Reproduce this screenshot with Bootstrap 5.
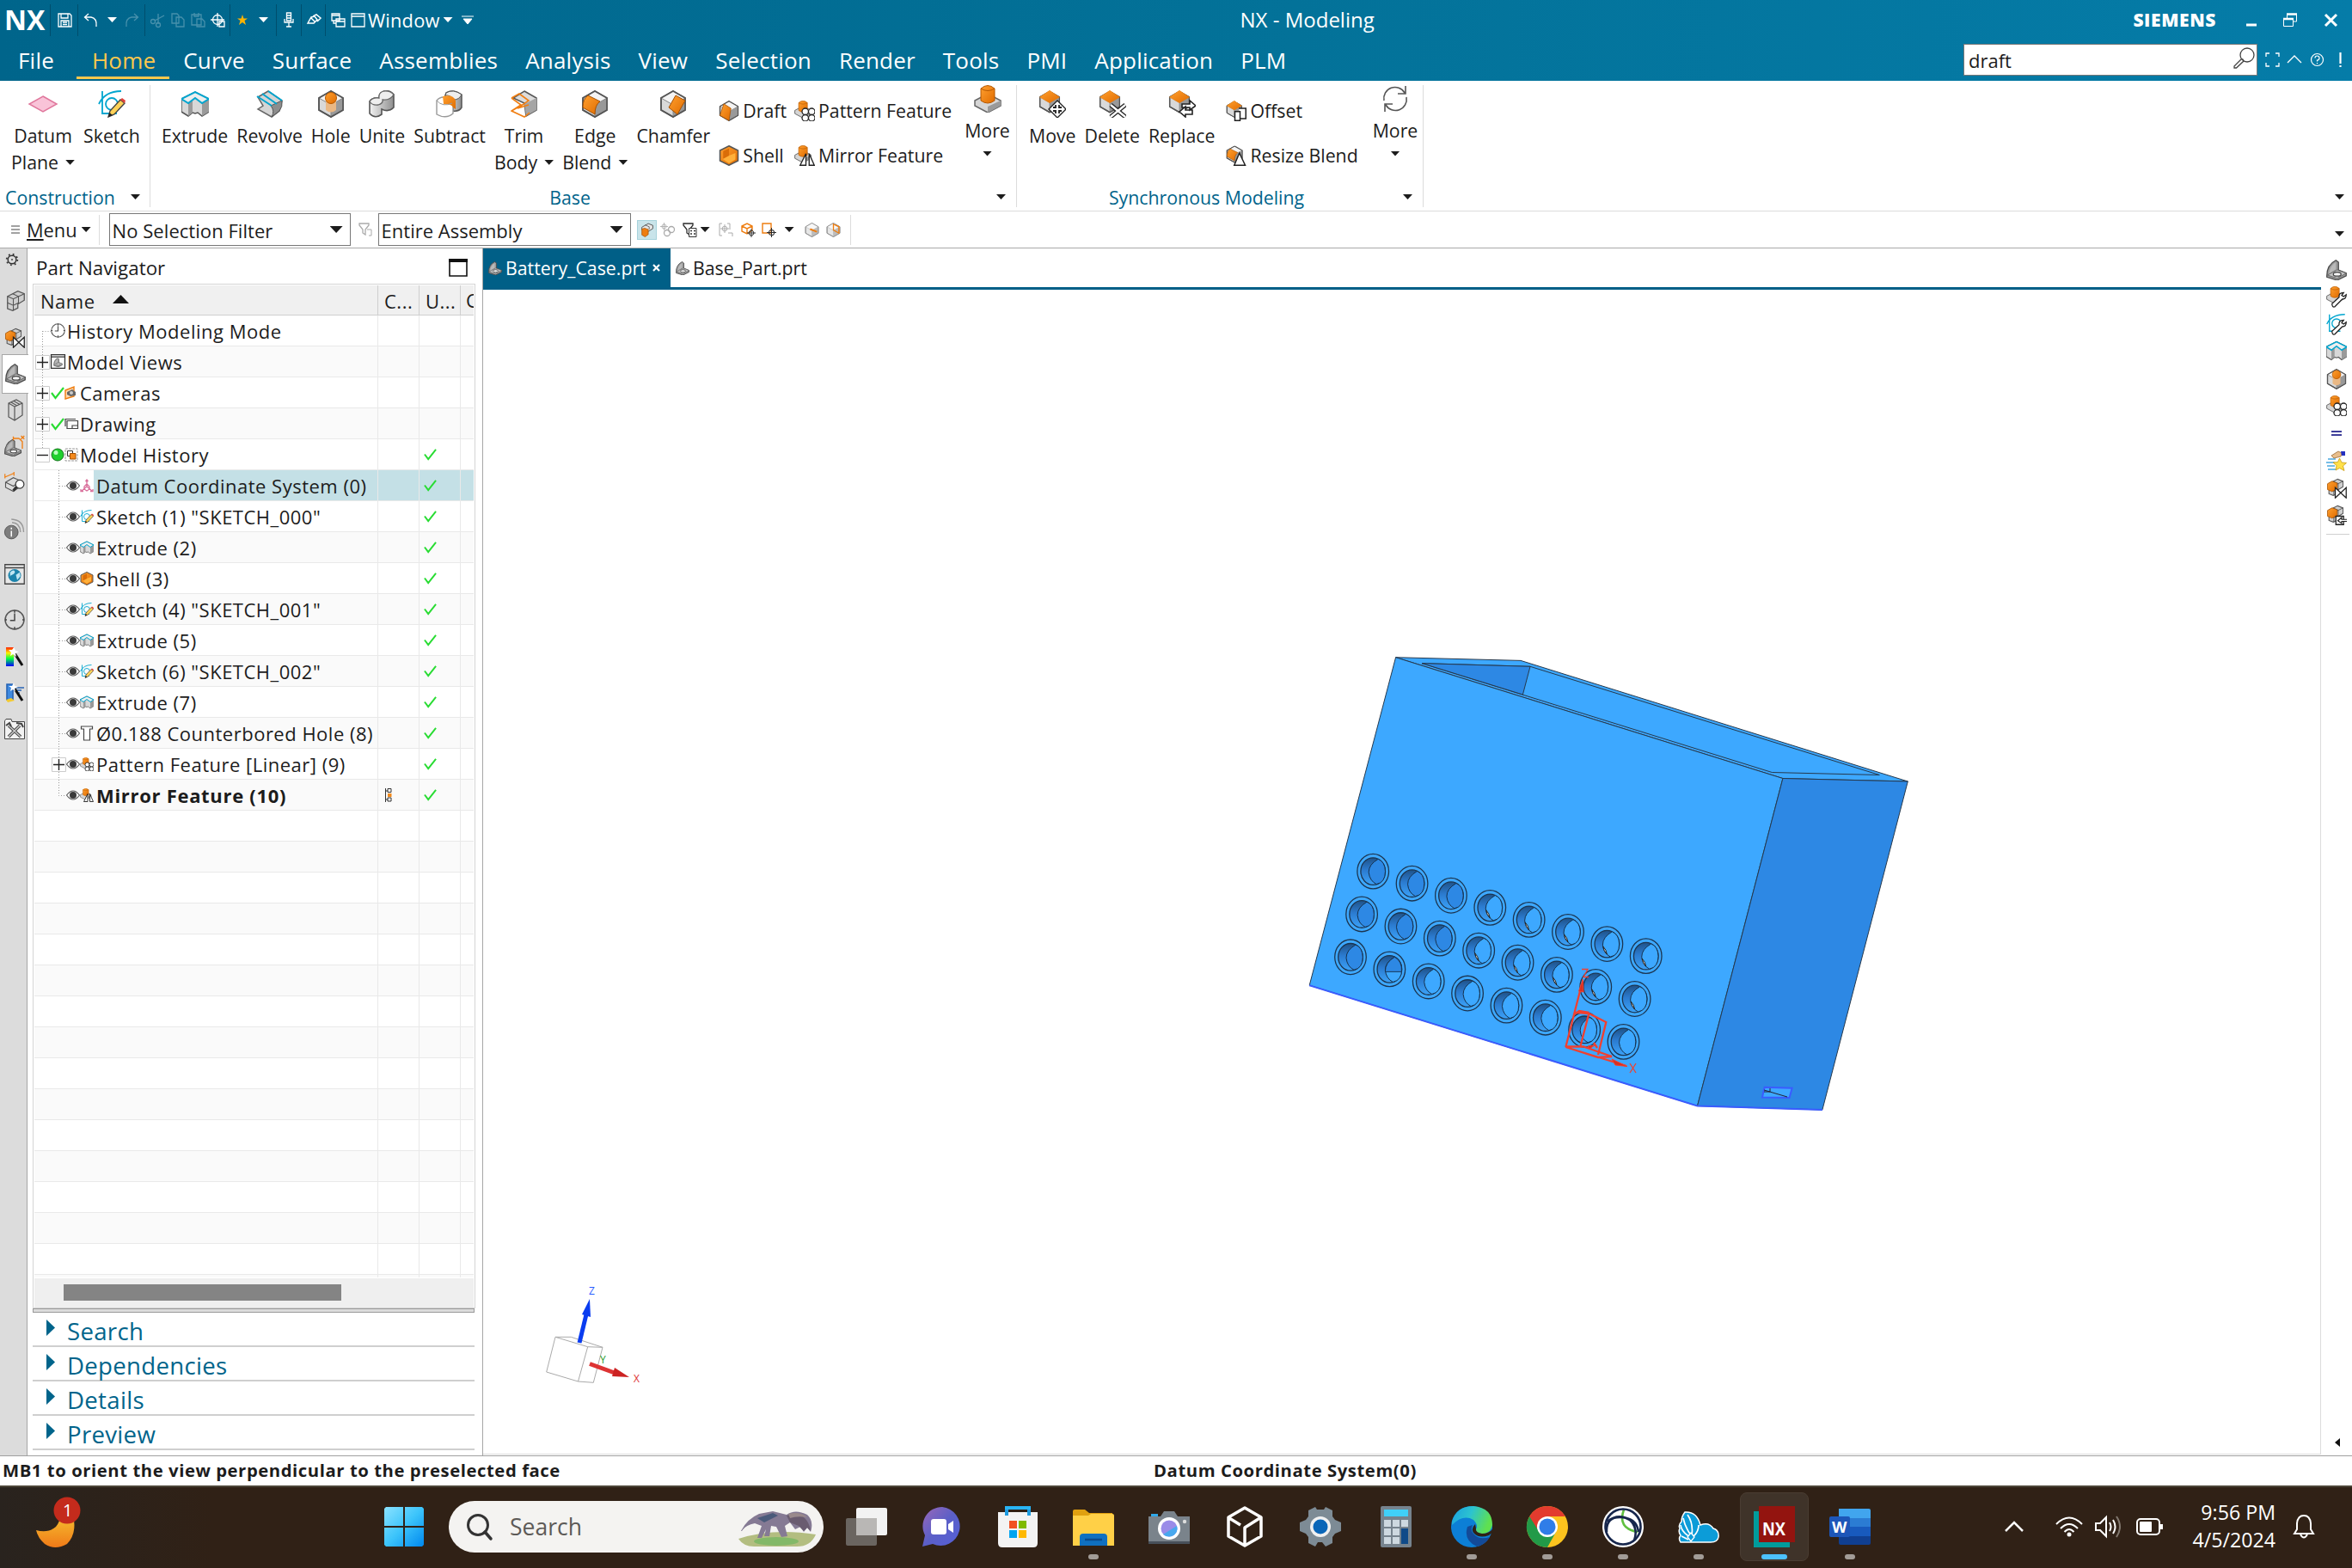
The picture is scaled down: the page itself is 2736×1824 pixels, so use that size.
<!DOCTYPE html>
<html lang="en">
<head>
<meta charset="utf-8">
<title>NX - Modeling</title>
<link href="https://cdn.jsdelivr.net/npm/bootstrap@5.3.0/dist/css/bootstrap.min.css" rel="stylesheet">
<style>
html,body{height:1824px;width:2736px;overflow:hidden}
body{font-family:"Open Sans","Noto Sans",sans-serif;font-size:21.3px;line-height:30px;color:#1c1c1c;background:#fff}
svg{display:block;flex:none;overflow:visible}
.nw{white-space:nowrap}
/* left gaps */
.g3{margin-left:3px}.g4{margin-left:4px}.g5{margin-left:5px}.g6{margin-left:6px}.g7{margin-left:7px}.g8{margin-left:8px}.g9{margin-left:9px}.g10{margin-left:10px}.g11{margin-left:11px}.g12{margin-left:12px}.g13{margin-left:13px}.g14{margin-left:14px}.g15{margin-left:15px}.g17{margin-left:17px}.g20{margin-left:20px}.g21{margin-left:21px}.g31{margin-left:31px}.g32{margin-left:32px}.g35{margin-left:35px}.g37{margin-left:37px}
/* top gaps */
.t6{margin-top:6px}.t7{margin-top:7px}.t8{margin-top:8px}.t9{margin-top:9px}.t18{margin-top:18px}.t19{margin-top:19px}.t27{margin-top:27px}.t28{margin-top:28px}.t29{margin-top:29px}.t31{margin-top:31px}
.top-bar{height:94px;background:linear-gradient(90deg,#00658b,#037299 55%,#057ca8);color:#fff}
.title-row{height:46px;padding:0 17px 0 5px}
.nx-logo{font-size:32px;font-weight:700;width:53px;line-height:46px}
.tb-sep{width:1px;height:37px;background:#004e6d;flex:none}
.i16{width:17px;height:17px}.i24{width:24px;height:24px}.i32{width:32px;height:32px}.i48{width:48px;height:48px}
.caret{width:11px;height:6px;background:currentColor;clip-path:polygon(0 0,100% 0,50% 100%);flex:none;display:block}
.caret-lg{width:15px;height:8px;background:#1c1c1c;clip-path:polygon(0 0,100% 0,50% 100%);flex:none}
.win-menu{font-size:21.8px;margin:1px 0 0 3px;letter-spacing:.2px}
.window-title{font-size:24px;margin-left:892px}
.dim{opacity:.28}
.brand-mark{font-size:21px;font-weight:800;letter-spacing:.6px}
.menu-tabs{padding-left:5px;height:48px}
.menu-tabs .nav-link{font-size:26px;line-height:46px;height:46px;padding:1px 16px 0;color:#fff;letter-spacing:.2px;border-radius:0}
.menu-tabs .nav-link:first-child{margin-right:10px}
.menu-tabs .nav-link.active{color:#ffc84d;border-bottom:3px solid #ffc84d;padding-left:18px}
.find-row{padding:0 12px 2px 0}
.cmd-find{width:342px;height:37px;border:1px solid #777;background:#fff;color:#1c1c1c;font-size:22px;padding:3px 2px 0 5px}
.ribbon{height:152px;border-bottom:1px solid #dcdcdc}
.rgroup{border-right:1px solid #dcdcdc;height:142px;margin-top:5px}
.rg-a{width:175px}.rg-b{width:1008px}.rg-c{width:473px}
.rbtns{height:113px;gap:10px;display:flex;padding-left:13px}
.rg-c .rbtns{padding-left:14px}
.rbtn{padding-top:6px;line-height:30.5px;text-align:center;display:flex;flex-direction:column;align-items:center;white-space:nowrap}
.rbtn svg{margin-bottom:6px}
.rbtn.more-btn{padding-top:0;margin-left:5px}
.rg-c .more-btn{margin-left:7px}
.rbtn .caret{color:#1c1c1c}
.rstack{padding-top:15px;display:flex;flex-direction:column;gap:22px;white-space:nowrap}
.rstack>div{display:flex;align-items:center;gap:4px}
.rstack+.rstack{margin-left:-1px}
.rlabel{color:#00648b;height:29px;padding:1px 12px 0 6px;line-height:34px}
.rg-a .rlabel{padding-right:11px}
.rlabel .caret{color:#1c1c1c;margin:13px 0 0 14px}
.rib-opt{padding:0 9px 13px 0}
.sel-bar{height:43px;border-bottom:1px solid #a9a9a9;font-size:22px}
.menu-word{margin:2px 0 0 8px;font-size:21.8px}
.combo{height:38px;border:1px solid #777;padding:2px 8px 0 3px;white-space:nowrap}
.combo .caret-lg{margin-top:-2px}
.cb-a{width:281px;letter-spacing:.05px}.cb-b{width:294px}
.vsep{width:1px;height:35px;background:#dcdcdc}
.vs-a{margin:0 11px 0 9px}
.reset-f{margin:0 6px 0 9px;color:#aaa}
.hot{width:23px;height:23px;background:#c9e4ea;border:1px solid #a8d3dc;margin-left:7px}
.c-gray{color:#aaa}.c-dark{color:#2a2a2a}
.bar-opt{margin:10px 9px 0 auto}
.work{height:1404px}
.res-bar{width:32px;background:#dcdcdc;border-right:1px solid #a6a6a6}
.res-bar svg{margin-left:5px}
.gear{margin-top:4px}
.res-tab{height:46px;width:31px;margin:7px -1px 0 2px;background:#fff;border:1px solid #a6a6a6;border-right:0;display:flex;align-items:center}
.res-tab svg{margin-left:3px}
.navigator{width:530px;padding-left:6px;border-right:1px solid #a6a6a6}
.nav-head{height:41px;padding:4px 17px 0 4px;font-size:22.3px;letter-spacing:.05px}
.nav-box{width:515px;height:1192px;border:1px solid #d4d4d4;padding:1px}
.tree{font-size:22px;letter-spacing:.5px;height:1154px;overflow:hidden}
.trow{display:flex;height:36px;border-bottom:1px solid #e9e9e9;white-space:nowrap;overflow:hidden}
.trow:nth-child(odd){background:#fafafa}
.trow>.c-name{flex:none;width:400px;border-right:1px solid #e9e9e9;display:flex;align-items:center}
.trow>.c-s{flex:none;width:48px;border-right:1px solid #e9e9e9;display:flex;align-items:center;padding-left:5px}
.c-l{flex:1;min-width:0;overflow:hidden}
.trow.thead-row{height:35px;background:#f0f0f0;border-color:#cfcfcf}
.thead-row>div{border-color:#cfcfcf!important}
.thead-row>.c-name{padding:2px 0 0 7px}
.thead-row>.c-s{padding:2px 0 0 7px}
.thead-row>.c-l{padding:2px 0 0 6px}
.sorter{margin:-4px 0 0 20px}
.tl{padding:2px 0 0 3px;height:36px;line-height:33px;flex:1}
.lv1 .tl{padding-left:2px}
.tl.fw-bold{letter-spacing:.7px}
.picked .tl,.picked .c-s,.picked .c-l{background:#c4e0e6}
.picked{background:#fff!important}
.hbar{height:35px;background:#efefef;border-top:1px solid #fff;padding:7px 0 0 34px}
.hthumb{width:323px;height:19px;background:#848484}
.splitter{width:514px;height:5px;background:#dcdcdc;border:1px solid #999}
.sect{width:514px;height:40px;border-bottom:2px solid #cfcfcf;color:#00648b;font-size:27.6px;padding:3px 0 0 16px;letter-spacing:.3px}
.sect i{width:10px;height:19px;background:#00648b;clip-path:polygon(0 0,100% 50%,0 100%);margin:-6px 14px 0 0}
.doc-tabs{height:48px;border-bottom:3px solid #005f87;width:2138px}
.doc-tab{height:45px;padding:0 6px;line-height:44px}
.doc-tab.active{background:#005f87;color:#fff;width:218px}
.view-area{width:2138px;height:1355px;border-right:1px solid #dcdcdc;border-bottom:1px solid #dcdcdc}
.side-bar{width:36px;padding:13px 0 0 6px}
.side-end{width:27px;height:1px;background:#d0d0d0;margin-top:10px}
.side-arrow{margin:auto 0 10px 10px}
.status{height:35px;border-top:1px solid #a0a0a0;font-weight:700;font-size:20.3px;letter-spacing:.56px;line-height:33px;padding-left:3px}
.status div:first-child{width:1339px}
.taskbar{height:96px;background:linear-gradient(90deg,#29231e,#302116 9%,#302116);border-top:2px solid #4c4538;color:#fff;padding-bottom:2px}
.moon{margin:-4px 0 0 40px}
.start{margin:-1px 0 0 347px}
.pill{width:436px;height:60px;border-radius:30px;background:#f4f3f1;color:#5d5a57;font-size:26.5px;margin-left:29px}
.beast{margin:4px 9px 0 auto}
.slot{width:88px;height:80px;display:flex;align-items:center;justify-content:center;position:relative}
.slot.run::after{content:"";position:absolute;bottom:2px;left:38px;width:12px;height:6px;border-radius:3px;background:#a29c97}
.slot.on::before{content:"";position:absolute;left:4px;top:0;width:80px;height:80px;border-radius:8px;background:#3f3329;border:1px solid #4a3d32}
.slot.on::after{left:29px;width:30px;background:#4cc2ff}
.slot svg{position:relative}
.tray{margin:0 43px 0 auto}
.clock{font-size:23.2px;line-height:32px;text-align:right;width:110px;margin:-2px 0 0 20px}
</style>
<script src="https://cdn.jsdelivr.net/npm/bootstrap@5.3.0/dist/js/bootstrap.bundle.min.js"></script>
</head>
<body>
<svg width="0" height="0" class="position-absolute">
<defs>
<linearGradient id="go" x1="0" y1="0" x2="1" y2="1"><stop offset="0" stop-color="#ffa030"/><stop offset="1" stop-color="#e06c00"/></linearGradient>
<linearGradient id="gg" x1="0" y1="0" x2="1" y2="0"><stop offset="0" stop-color="#f2f2f2"/><stop offset="1" stop-color="#8f8f8f"/></linearGradient>
<linearGradient id="hl" x1="0" y1="0" x2="0" y2="1"><stop offset="0" stop-color="#1f5288"/><stop offset=".45" stop-color="#2b7bd0"/><stop offset="1" stop-color="#3ba2f8"/></linearGradient>
<symbol id="cube" viewBox="0 0 32 32"><path d="M16 1 30 9V23L16 31 2 23V9z" fill="#d9d9d9" stroke="#555" stroke-width="1.6"/><path d="M16 17 30 9V23L16 31z" fill="#999"/><path d="M16 1 30 9 16 17 2 9z" fill="#f4f4f4"/><path d="M2 9 16 17 30 9M16 17V31" fill="none" stroke="#888"/><path d="M16 1 30 9V23L16 31 2 23V9z" fill="none" stroke="#555" stroke-width="1.6"/></symbol>
<symbol id="extrude" viewBox="0 0 32 32"><path d="M0 10V25L8 30 13 26 16 27 19 26 24 30 32 25V10L16 2z" fill="#d8d8d8" stroke="#555" stroke-width="1.5"/><path d="M8 15V30L13 26V12zM24 15 32 10V25L24 30z" fill="#9a9a9a"/><path d="M0 10 16 2 32 10 24 15 16 9 8 15z" fill="#eee" stroke="#00a5cf" stroke-width="2"/></symbol>
<symbol id="revolve" viewBox="0 0 32 32"><path d="M2 8 14 1 30 12 27 24 18 31 2 22 8 18z" fill="#d5d5d5" stroke="#666" stroke-width="1.500"/><path d="M18 31Q22 24 17 18L30 12Q31 19 27 24z" fill="#8d8d8d" stroke="#555"/><path d="M1 7 18 18M7 4 24 16M14 1 30 12" stroke="#00a5cf" stroke-width="2" fill="none"/></symbol>
<symbol id="hole" viewBox="0 0 32 32"><use href="#cube"/><path d="M10 9v14q6 5 12 0V9z" fill="#eab884"/><circle cx="16" cy="9" r="6.5" fill="url(#go)" stroke="#b65800"/></symbol>
<symbol id="unite" viewBox="0 0 32 32"><path d="M2 13V27Q8 34 16 28V22Q24 26 30 20V5Q24-2 15 3 13 6 13 9 5 8 2 13z" fill="url(#gg)" stroke="#555" stroke-width="1.6"/><path d="M2 13Q5 8 13 9 12 3 18 1 26 0 30 5 26 12 17 11 18 15 12 17 5 18 2 13z" fill="#eee" stroke="#666" stroke-width="1.300"/></symbol>
<symbol id="subtract" viewBox="0 0 32 32"><path d="M12 3Q20-2 30 5V20Q27 25 20 24V14L10 9z" fill="url(#gg)" stroke="#555" stroke-width="1.5"/><path d="M12 3Q20-2 30 5 27 11 21 11 16 5 11 6z" fill="#eee" stroke="#555"/><path d="M1 12Q6 6 13 9 19 12 20 16V27Q12 34 1 28z" fill="#fff" stroke="#999" stroke-width="1.4"/><path d="M8 7Q20 4 23 12V22L20 20Q19 16 9 16z" fill="url(#go)"/><path d="M1 12Q8 20 19 15" fill="none" stroke="#999"/></symbol>
<symbol id="trim" viewBox="0 0 32 32"><path d="M16 1 30 9V23L18 30 16 15 3 9z" fill="#dcdcdc" stroke="#555" stroke-width="1.5"/><path d="M16 16 30 9V23L18 30z" fill="#a5a5a5"/><path d="M1 9 10 4 21 12 8 21 21 17M1 9 12 17 1 24 16 31 22 26M1 24 10 19" fill="none" stroke="#f07e12" stroke-width="1.6"/></symbol>
<symbol id="blend" viewBox="0 0 32 32"><use href="#cube"/><path d="M8 6 22 13Q16 17 16 28L2 20Q2 10 8 6z" fill="url(#go)" stroke="#a65000"/></symbol>
<symbol id="chamfer" viewBox="0 0 32 32"><use href="#cube"/><path d="M19 6 30 12 21 28 11 20z" fill="url(#go)" stroke="#a65000"/></symbol>
<symbol id="draft" viewBox="0 0 32 32"><use href="#cube"/><path d="M8 5 19 12 16 31 2 23z" fill="url(#go)" stroke="#a65000"/></symbol>
<symbol id="shell" viewBox="0 0 32 32"><path d="M16 1 30 8V24L16 31 2 24V8z" fill="url(#go)" stroke="#555" stroke-width="2"/><path d="M16 16 26 12V22L16 28 6 21z" fill="#ffb03a"/><path d="M7 9 16 5V16L7 21z" fill="#d96d08"/></symbol>
<symbol id="boss" viewBox="0 0 32 32"><path d="M1 18 16 10 31 18V24L16 32 1 24z" fill="#d5d5d5" stroke="#666" stroke-width="1.5"/><path d="M16 25 31 18V24L16 32z" fill="#9a9a9a"/><path d="M8 4Q16-3 24 4V18Q16 24 8 18z" fill="url(#go)" stroke="#b65800"/><path d="M8 4Q16 9 24 4" fill="none" stroke="#b65800"/></symbol>
<symbol id="pattern" viewBox="0 0 32 32"><use href="#boss" width="27" height="27"/><g fill="#fff" stroke="#222" stroke-width="1.7"><circle cx="17" cy="17" r="5"/><circle cx="27" cy="17" r="5"/><circle cx="17" cy="27" r="5"/><circle cx="27" cy="27" r="5"/></g></symbol>
<symbol id="mirror" viewBox="0 0 32 32"><use href="#boss" width="27" height="27"/><path d="M18 13V31H9zM23 13V31H31z" fill="#fff" stroke="#222" stroke-width="1.8"/></symbol>
<symbol id="face" viewBox="0 0 32 32"><use href="#cube" width="26" height="27"/><path d="M13 0 25 8 13 15 1 8z" fill="url(#go)"/></symbol>
<symbol id="movef" viewBox="0 0 32 32"><use href="#face"/><path d="M22 12 32 22 22 32 12 22z" fill="#fff" stroke="#222" stroke-width="1.400"/><path d="M20 17v3h-3M24 17v3h3M20 27v-3h-3M24 27v-3h3" fill="none" stroke="#222" stroke-width="1.800"/></symbol>
<symbol id="delf" viewBox="0 0 32 32"><use href="#face"/><path d="M14 17 31 31M31 17 14 31" stroke="#222" stroke-width="5"/><path d="M14 17 31 31M31 17 14 31" stroke="#fff" stroke-width="2.4"/></symbol>
<symbol id="repf" viewBox="0 0 32 32"><use href="#face"/><path d="M16 16h9v-4l7 6-7 5v-3h-9zM28 23h-8v-4l-7 6 7 6v-3h8z" fill="#fff" stroke="#222" stroke-width="1.6"/></symbol>
<symbol id="offf" viewBox="0 0 32 32"><use href="#face"/><path d="M14 17h8v14h-8zM20 12h11v16h-8" fill="#fff" stroke="#222" stroke-width="2"/></symbol>
<symbol id="resf" viewBox="0 0 32 32"><use href="#blend" width="27" height="28"/><path d="M21 12 30 31H13z" fill="#fff" stroke="#222" stroke-width="2"/></symbol>
<symbol id="cycle" viewBox="0 0 32 32"><path d="M3 18A13 13 0 0 1 27 9M29 14A13 13 0 0 1 5 23M28 1v9h-9M4 31v-9h9" fill="none" stroke="#555" stroke-width="1.6"/></symbol>
<symbol id="sketch" viewBox="0 0 32 32"><path d="M5 1V27H22M1 16Q8 1 27 1" fill="none" stroke="#00a5cf" stroke-width="1.8"/><circle cx="16" cy="16" r="7" fill="none" stroke="#00a5cf" stroke-width="1.8"/><path d="M12 31 14 24 26 11 31 15 19 28z" fill="#ffd257" stroke="#444" stroke-width="1.4"/><path d="M26 11l5 4 1-3-4-3z" fill="#e0423a"/><path d="M12 31 13.500 26 17 29z" fill="#222"/></symbol>
<symbol id="wrench" viewBox="0 0 32 32"><path d="M13 30 25 18Q31 18 31 11L27 14 24 12 27 8Q19 8 20 15L9 25Q9 31 13 30z" fill="#fff" stroke="#222" stroke-width="1.7"/></symbol>
<symbol id="part" viewBox="0 0 32 32"><path d="M1 25Q1 8 15 1L19 4V16L31 21V25L17 32 1 27z" fill="#999" stroke="#4a4a4a" stroke-width="1.700"/><path d="M4 22Q6 9 15 4V15z" fill="#b9b9b9"/><path d="M2 24 17 16 31 21 17 29z" fill="#c4c4c4" stroke="#555"/><ellipse cx="17" cy="22.500" rx="6" ry="3" fill="#f5f5f5" stroke="#444" stroke-width="1.700"/></symbol>
<symbol id="blocks" viewBox="0 0 32 32"><path d="M5 9 21 1 31 5V15L21 21V27L13 31 5 28z" fill="#cfcfcf" stroke="#555" stroke-width="1.700"/><path d="M5 9 14 13 31 5M14 13V31M13 5 22 9V21M5 19l9 4 8-4" fill="none" stroke="#555" stroke-width="1.400"/></symbol>
<symbol id="oblocks" viewBox="0 0 32 32"><use href="#blocks" width="27" height="29"/><path d="M2 9 9 5 17 8V17L9 21 2 18z" fill="url(#go)" stroke="#a65000"/></symbol>
<symbol id="constr" viewBox="0 0 32 32"><use href="#oblocks"/><path d="M14 15V31L31 15V31z" fill="#fff" stroke="#222" stroke-width="1.7"/></symbol>
<symbol id="expblk" viewBox="0 0 32 32"><use href="#oblocks"/><path d="M15 18h12v13H15z" fill="#fff" stroke="#222" stroke-width="1.7"/><path d="M32 23H24V20L18 25 24 29V26H32" fill="#fff" stroke="#222" stroke-width="1.5"/></symbol>
<symbol id="eye" viewBox="0 0 16 16"><path d="M.5 8Q8-2 15.500 8 8 18 .5 8z" fill="#fff" stroke="#555" stroke-width="1.100"/><circle cx="8" cy="8" r="4" fill="#3a3a3a"/></symbol>
<symbol id="tick" viewBox="0 0 16 16"><path d="M1 8 5.500 14 15 2" fill="none" stroke="#28dc32" stroke-width="2.100"/></symbol>
<symbol id="clk" viewBox="0 0 16 16"><circle cx="8" cy="8" r="7.300" fill="none" stroke="#555"/><path d="M8 3V8.500H4.500M8 .5v2M8 13.500v2M.5 8h1.500M14 8h1.500" fill="none" stroke="#444"/></symbol>
<symbol id="plus" viewBox="0 0 19 36"><path d="M9.500 0V36" stroke="#999" stroke-dasharray="1 2"/><path d="M1.500 10.500h16v16h-16z" fill="#fff" stroke="#ccc"/><path d="M3 18.500H16M9.500 12V25" stroke="#222" stroke-width="1.400"/></symbol>
<symbol id="minus" viewBox="0 0 19 36"><path d="M9.500 0V10" stroke="#999" stroke-dasharray="1 2"/><path d="M1.500 10.500h16v16h-16z" fill="#fff" stroke="#ccc"/><path d="M3 18.500H16" stroke="#222" stroke-width="1.400"/></symbol>
<symbol id="ln" viewBox="0 0 37 36"><path d="M28.500 0V36M29 18.500H37" stroke="#999" stroke-dasharray="1 2"/></symbol>
<symbol id="target" viewBox="0 0 16 16"><circle cx="8" cy="8" r="4.500" fill="none" stroke="currentColor" stroke-width="1.500"/><path d="M8 0V16M0 8H16" stroke="currentColor" stroke-width="1.500"/></symbol>
<symbol id="funnel" viewBox="0 0 17 17"><path d="M1 1H12V3L8 8V14L5 12V8L1 3z" fill="none" stroke="currentColor" stroke-width="1.300"/></symbol>
<!-- drilled holes: far side wall, lit back wall, lit back wall with daylight showing through -->
<symbol id="hd" viewBox="-20 -22 40 44"><ellipse rx="18.300" ry="20.300" fill="#3da8ff" stroke="#1c3550" stroke-width="1.300"/><ellipse rx="14.300" ry="15.800" fill="url(#hl)" stroke="#1c3550" stroke-width="1.300"/><path d="M6-14.300Q-5-8-5 1 -4 11 4 15 14.300 13 14.300 0 14-11 6-14.300z" fill="#2d88e4" stroke="#16314d"/></symbol>
<symbol id="hb" viewBox="-20 -22 40 44"><ellipse rx="18.300" ry="20.300" fill="#3da8ff" stroke="#1c3550" stroke-width="1.300"/><ellipse rx="14.300" ry="15.800" fill="url(#hl)" stroke="#1c3550" stroke-width="1.300"/><path d="M6-14.300Q-5-8-5 1 -4 11 4 15 14.300 13 14.300 0 14-11 6-14.300z" fill="#3da8ff" stroke="#16314d"/></symbol>
<symbol id="hw" viewBox="-20 -22 40 44"><use href="#hb" x="-20" y="-22" width="40" height="44"/><path d="M-4.500 3Q-4 8 0 12L-1.500 7z" fill="#e8f0f5" stroke="#222" stroke-width="1"/></symbol>
</defs>
</svg>

<header class="top-bar">
  <div class="title-row d-flex align-items-center">
    <div class="nx-logo">NX</div><div class="tb-sep"></div>
    <svg class="i16 ms-2" viewBox="0 0 17 17"><path d="M1 1H14L16 3V16H1zM4 1V6H12V1M4 16V9H13V16M6 11h5M6 13.500h5" fill="none" stroke="#fff" stroke-width="1.300"/></svg>
    <div class="tb-sep g6"></div>
    <svg class="i16 g6" viewBox="0 0 17 17"><path d="M6 1 1.500 5 6 9M2 5H9Q16 6 15 16" fill="none" stroke="#fff" stroke-width="1.300"/></svg>
    <div class="caret g11"></div>
    <svg class="i16 dim g9" viewBox="0 0 17 17"><path d="M11 1 15.500 5 11 9M15 5H8Q1 6 2 16" fill="none" stroke="#fff" stroke-width="1.300"/></svg>
    <div class="tb-sep g6"></div>
    <svg class="i16 dim g6" viewBox="0 0 17 17"><g fill="none" stroke="#fff" stroke-width="1.300"><path d="M16 3 5 9M9 1V13"/><circle cx="3" cy="10" r="2.500"/><circle cx="9" cy="14" r="2.500"/></g></svg>
    <svg class="i16 dim g7" viewBox="0 0 17 17"><path d="M1 1H7L9 3V12H1zM6 5H12L15 8V16H6z" fill="none" stroke="#fff" stroke-width="1.300"/></svg>
    <svg class="i16 dim g6" viewBox="0 0 17 17"><path d="M1 2H12V14H1zM4 0V4H9V0M7 7H13L16 10V16H7z" fill="none" stroke="#fff" stroke-width="1.300"/></svg>
    <svg class="i16 g6" viewBox="0 0 17 17"><circle cx="8" cy="8" r="5.500" fill="none" stroke="#fff" stroke-width="1.300"/><path d="M8 0V16M0 8H16M10 10H16V16H10z" fill="none" stroke="#fff" stroke-width="1.300"/></svg>
    <div class="tb-sep g5"></div>
    <svg width="12" height="12" class="g8" viewBox="0 0 12 12"><path d="M6 0 7.500 4.500H12L8.500 7 10 12 6 9 2 12 3.500 7 0 4.500H4.500z" fill="#ffb400"/></svg>
    <div class="caret g13"></div>
    <div class="tb-sep g9"></div>
    <svg width="12" height="18" class="g8" viewBox="0 0 12 18"><path d="M3.500 1H8.500V10H3.500zM1 8V12H11V8M6 12V17M3 17H9M4 4H8M4 7H8" fill="none" stroke="#fff" stroke-width="1.300"/></svg>
    <div class="tb-sep g8"></div>
    <svg class="i16 g6" viewBox="0 0 17 17"><path d="M1 12 5 5 9 4 12 8 8 12zM7 4 11 2 16 6 12 10M5 6l4 4" fill="none" stroke="#fff" stroke-width="1.500"/></svg>
    <div class="tb-sep g4"></div>
    <svg class="i16 g6" viewBox="0 0 17 17"><path d="M1 1H10V9H1zM1 3H10M6 7H16V16H6zM6 10H16M3 9V12H6" fill="none" stroke="#fff" stroke-width="1.300"/></svg>
    <svg class="i16 g6" viewBox="0 0 17 17"><path d="M1 1H16V16H1zM1 4H16" fill="none" stroke="#fff" stroke-width="1.300"/></svg>
    <span class="nw win-menu">Window</span>
    <div class="caret g4"></div>
    <svg width="14" height="11" class="g10" viewBox="0 0 14 11"><path d="M0 1H14M2 4H12L7 10z" fill="#fff" stroke="#fff"/></svg>
    <div class="window-title nw">NX - Modeling</div>
    <div class="d-flex align-items-center ms-auto">
      <span class="brand-mark">SIEMENS</span>
      <svg class="g35" width="12" height="16" viewBox="0 0 12 16"><path d="M0 14H12" stroke="#fff" stroke-width="3"/></svg>
      <svg class="g31" width="16" height="16" viewBox="0 0 16 16"><path d="M4.500 6V1.500H15.500V10H11M.5 6.500H11.500V15.500H.5z" fill="none" stroke="#fff"/><path d="M4 1.500H16M0 7H12" stroke="#fff" stroke-width="2.500"/></svg>
      <svg class="g32" width="15" height="15" viewBox="0 0 15 15"><path d="M1 1 14 14M14 1 1 14" stroke="#fff" stroke-width="3"/></svg>
    </div>
  </div>
  <div class="d-flex">
    <nav class="nav menu-tabs flex-nowrap nw">
      <a class="nav-link">File</a><a class="nav-link active">Home</a><a class="nav-link">Curve</a><a class="nav-link">Surface</a><a class="nav-link">Assemblies</a><a class="nav-link">Analysis</a><a class="nav-link">View</a><a class="nav-link">Selection</a><a class="nav-link">Render</a><a class="nav-link">Tools</a><a class="nav-link">PMI</a><a class="nav-link">Application</a><a class="nav-link">PLM</a>
    </nav>
    <div class="ms-auto d-flex align-items-center find-row">
      <div class="cmd-find d-flex align-items-start justify-content-between"><span>draft</span>
        <svg width="25" height="25" viewBox="0 0 25 25"><circle cx="16" cy="9" r="8" fill="none" stroke="#444" stroke-width="1.300"/><path d="M11 14 9.500 13.500 1 22 1 24 3.500 24 12 16z" fill="none" stroke="#444" stroke-width="1.300"/></svg></div>
      <svg class="i16 g9" viewBox="0 0 17 17"><path d="M1 5V1H5M12 1H16V5M16 12V16H12M5 16H1V12" fill="none" stroke="#fff" stroke-width="1.300"/></svg>
      <svg class="i16 g9" viewBox="0 0 17 17"><path d="M0 12 8 4 16 12" fill="none" stroke="#fff" stroke-width="1.300"/></svg>
      <svg class="i16 g9" viewBox="0 0 17 17"><circle cx="8.500" cy="8.500" r="7" fill="none" stroke="#fff" stroke-width="1.200"/><path d="M6 6.500Q6 4 8.500 4T11 6.500 8.500 9V10.500M8.500 12v1.300" fill="none" stroke="#fff" stroke-width="1.200"/></svg>
      <svg width="3" height="17" class="g17" viewBox="0 0 3 17"><path d="M1.500 0V13M1.500 15V17" stroke="#fff" stroke-width="2.200"/></svg>
    </div>
  </div>
</header>

<section class="ribbon d-flex">
  <div class="rgroup rg-a">
    <div class="rbtns">
      <div class="rbtn"><svg class="i32" viewBox="0 0 32 32"><path d="M16 7 32 16 16 25 0 16z" fill="#f9c3d8" stroke="#e0779c" stroke-width="1.500"/></svg><span>Datum</span><span class="d-flex align-items-center gap-2">Plane<i class="caret"></i></span></div>
      <div class="rbtn"><svg class="i32"><use href="#sketch"/></svg>Sketch</div>
    </div>
    <div class="rlabel d-flex justify-content-between"><span>Construction</span><i class="caret"></i></div>
  </div>
  <div class="rgroup rg-b">
    <div class="rbtns">
      <div class="rbtn"><svg class="i32"><use href="#extrude"/></svg>Extrude</div>
      <div class="rbtn"><svg class="i32"><use href="#revolve"/></svg>Revolve</div>
      <div class="rbtn"><svg class="i32"><use href="#hole"/></svg>Hole</div>
      <div class="rbtn"><svg class="i32"><use href="#unite"/></svg>Unite</div>
      <div class="rbtn"><svg class="i32"><use href="#subtract"/></svg>Subtract</div>
      <div class="rbtn"><svg class="i32"><use href="#trim"/></svg><span>Trim</span><span class="d-flex align-items-center gap-2">Body<i class="caret"></i></span></div>
      <div class="rbtn"><svg class="i32"><use href="#blend"/></svg><span>Edge</span><span class="d-flex align-items-center gap-2">Blend<i class="caret"></i></span></div>
      <div class="rbtn"><svg class="i32"><use href="#chamfer"/></svg>Chamfer</div>
      <div class="rstack"><div><svg class="i24"><use href="#draft"/></svg>Draft</div><div><svg class="i24"><use href="#shell"/></svg>Shell</div></div>
      <div class="rstack"><div><svg class="i24"><use href="#pattern"/></svg>Pattern Feature</div><div><svg class="i24"><use href="#mirror"/></svg>Mirror Feature</div></div>
      <div class="rbtn more-btn"><svg class="i32"><use href="#boss"/></svg>More<i class="caret mt-2"></i></div>
    </div>
    <div class="rlabel d-flex"><span class="flex-fill text-center">Base</span><i class="caret"></i></div>
  </div>
  <div class="rgroup rg-c">
    <div class="rbtns">
      <div class="rbtn"><svg class="i32"><use href="#movef"/></svg>Move</div>
      <div class="rbtn"><svg class="i32"><use href="#delf"/></svg>Delete</div>
      <div class="rbtn"><svg class="i32"><use href="#repf"/></svg>Replace</div>
      <div class="rstack g3"><div><svg class="i24"><use href="#offf"/></svg>Offset</div><div><svg class="i24"><use href="#resf"/></svg>Resize Blend</div></div>
      <div class="rbtn more-btn"><svg class="i32"><use href="#cycle"/></svg>More<i class="caret mt-2"></i></div>
    </div>
    <div class="rlabel d-flex"><span class="flex-fill text-center">Synchronous Modeling</span><i class="caret"></i></div>
  </div>
  <div class="ms-auto align-self-end rib-opt"><i class="caret"></i></div>
</section>

<section class="sel-bar d-flex align-items-center">
  <svg width="10" height="10" class="g13" viewBox="0 0 10 10"><path d="M0 1H10M0 5H10M0 9H10" stroke="#444"/></svg>
  <span class="menu-word"><u>M</u>enu</span><i class="caret g5"></i>
  <div class="vsep vs-a"></div>
  <div class="combo cb-a d-flex justify-content-between align-items-center"><span>No Selection Filter</span><i class="caret-lg"></i></div>
  <svg class="i16 reset-f" viewBox="0 0 17 17"><use href="#funnel" width="17" height="17"/><path d="M10 8H15V15H12" fill="none" stroke="#aaa"/></svg>
  <div class="combo cb-b d-flex justify-content-between align-items-center"><span>Entire Assembly</span><i class="caret-lg"></i></div>
  <div class="hot d-flex align-items-center justify-content-center"><svg width="15" height="17" viewBox="0 0 28 32"><path d="M3 10 17 2 27 6V13L16 20 3 16z" fill="#e6e6e6" stroke="#555" stroke-width="1.800"/><path d="M3 14 9 12 17 15V26L10 31 3 27z" fill="#ee7d10" stroke="#a65000" stroke-width="1.300"/><path d="M10 5 19 9V15" fill="none" stroke="#555" stroke-width="1.500"/></svg></div>
  <svg class="i16 g4 c-gray" viewBox="0 0 17 17"><use href="#target" width="9" height="9"/><circle cx="8" cy="12" r="3.500" fill="none" stroke="#aaa" stroke-width="1.300"/><circle cx="13" cy="8" r="3.500" fill="none" stroke="#aaa" stroke-width="1.300"/></svg>
  <svg class="i16 g9 c-dark" viewBox="0 0 17 17"><use href="#funnel" width="17" height="17"/><path d="M7.500 6.500H16V16.500H7.500z" fill="#fff" stroke="#333"/><path d="M9 9.500h2M9 13h2M13 9.500h2M13 13h2" stroke="#333" stroke-width="1.500"/></svg>
  <i class="caret g4"></i>
  <svg class="i16 g10 c-gray" viewBox="0 0 17 17"><use href="#target" x="2" y="2" width="10" height="10"/><path d="M4 1H1V15H4M10 1H13V8M11 12h5V16" fill="none" stroke="#aaa"/></svg>
  <svg class="i16 g9 c-dark" viewBox="0 0 17 17"><path d="M1 4 7 1 13 4V9L7 13 1 10zM1 4 7 7 13 4M7 7V12" fill="none" stroke="#ee7d10" stroke-width="1.400"/><use href="#target" x="7" y="7" width="10" height="10"/></svg>
  <svg class="i16 g7 c-dark" viewBox="0 0 17 17"><path d="M1 1H11V12H1z" fill="none" stroke="#ee7d10" stroke-width="1.400"/><use href="#target" x="6" y="6" width="11" height="11"/></svg>
  <i class="caret g10"></i>
  <svg class="i16 g12" viewBox="0 0 32 32"><g opacity=".65"><use href="#cube" width="32" height="32"/></g><path d="M12 14 27 20" stroke="#ee7d10" stroke-width="4"/></svg>
  <svg class="i16 g8" viewBox="0 0 32 32"><g opacity=".65"><use href="#cube" width="32" height="32"/></g><path d="M16 2V16L28 23V9L16 3" fill="none" stroke="#ee7d10" stroke-width="2.500"/></svg>
  <div class="vsep g11"></div>
  <i class="caret bar-opt"></i>
</section>

<main class="work d-flex">
  <aside class="res-bar d-flex flex-column flex-shrink-0">
    <svg width="18" height="18" class="gear" viewBox="0 0 18 18"><circle cx="9" cy="9" r="4.800" fill="none" stroke="#333" stroke-width="1.500"/><circle cx="9" cy="9" r="6.300" fill="none" stroke="#333" stroke-width="1.800" stroke-dasharray="1.800 3.150"/><circle cx="9" cy="9" r=".9" fill="#333"/></svg>
    <svg class="i24 t27"><use href="#blocks"/></svg>
    <svg class="i24 t19"><use href="#constr"/></svg>
    <div class="res-tab"><svg class="i24"><use href="#part"/></svg></div>
    <svg class="i24 t7" viewBox="0 0 24 24"><path d="M5 4 14 0 21 4V18L12 24 5 20zM5 4 12 8V24M8 3 15 7M11 1.500 18 5.500M12 8 21 4" fill="#d8d8d8" stroke="#555" stroke-width="1.200"/></svg>
    <svg class="i24 t18" viewBox="0 0 32 32"><use href="#part" y="5" width="27" height="27"/><path d="M14 1V7M14 4H23M23 4 28 9V20M26 0l5 5M31 0l-5 5" fill="none" stroke="#f07e12" stroke-width="1.800"/></svg>
    <svg class="i24 t18" viewBox="0 0 32 32"><path d="M2 16 14 9 26 14V22L14 30 2 24zM2 16 14 22 26 14" fill="#ddd" stroke="#555" stroke-width="1.500"/><path d="M1 10V3M1 8 15 2M15 0V6" fill="none" stroke="#f07e12" stroke-width="1.600"/><path d="M20 22 14 29" stroke="#333" stroke-width="4"/><circle cx="24" cy="19" r="6.500" fill="#fff" stroke="#333" stroke-width="1.600"/></svg>
    <svg class="i24 t31" viewBox="0 0 32 32"><circle cx="11" cy="20" r="10.500" fill="#7d7d7d" stroke="#444"/><path d="M11 18V27M11 13v2.500" stroke="#fff" stroke-width="2"/><path d="M12 5Q25 6 25 20M11 0Q30 1 30 20" fill="none" stroke="#999" stroke-width="1.800"/></svg>
    <svg class="i24 t28" viewBox="0 0 32 32"><path d="M1 1H31V31H1zM1 6H31" fill="#e8e8e8" stroke="#444" stroke-width="1.700"/><circle cx="16" cy="18" r="10" fill="#1b83ab"/><path d="M9 13q5-5 7-2t-4 6-3 2zM18 17l6-4 1 6-5 6z" fill="#bfe6f2"/></svg>
    <svg class="i24 t29"><use href="#clk"/></svg>
    <svg class="i24 t19" viewBox="0 0 24 24"><defs><linearGradient id="rb" x2="0" y2="1"><stop stop-color="#f20"/><stop offset=".3" stop-color="#fe0"/><stop offset=".6" stop-color="#0f4"/><stop offset="1" stop-color="#00f"/></linearGradient></defs><path d="M2 1H11V23H2z" fill="url(#rb)"/><path d="M12 8 21 22" stroke="#111" stroke-width="3"/><path d="M11 1l2 4 4 1-4 2 1 4-4-3-3 2 1-4-3-3h4z" fill="#fff"/></svg>
    <svg class="i24 t18" viewBox="0 0 24 24"><path d="M3 2H10V20H3zM11 6H23M13 9H20M14 12H18" fill="#3f8ae0" stroke="#2763b4" stroke-width="1.600"/><path d="M2 20l6-2 4 3-8 2z" fill="#f4cb31"/><path d="M12 7 21 21" stroke="#111" stroke-width="3"/><path d="M11 0l1 4 4 1-4 2 1 3-3-2-3 2 1-4-3-2h4z" fill="#fff"/></svg>
    <svg class="i24 t18" viewBox="0 0 24 24"><path d="M.5 2.500V23.500H23.500V3.500H9L8 .5H2z" fill="#f2f2f2" stroke="#444"/><path d="M5 8 19 21M18 8 5 21" stroke="#444" stroke-width="3.500"/><path d="M5 8 19 21M18 8 5 21" stroke="#ccc" stroke-width="1.500"/><path d="M2 8l4-3 2 4M14 5l6 1 2 4" fill="none" stroke="#444" stroke-width="2"/></svg>
  </aside>

  <section class="navigator flex-shrink-0">
    <div class="nav-head d-flex justify-content-between align-items-center"><span>Part Navigator</span><svg width="22" height="21" viewBox="0 0 22 21"><path d="M1 1H21V20H1z" fill="none" stroke="#111" stroke-width="1.600"/><path d="M0 2H22" stroke="#111" stroke-width="4"/></svg></div>
    <div class="nav-box">
      <div class="tree" id="tree">
        <div class="trow thead-row"><div class="c-name">Name<svg width="19" height="10" class="sorter" viewBox="0 0 19 10"><path d="M0 10H19L9.500 0z" fill="#111"/></svg></div><div class="c-s">C...</div><div class="c-s">U...</div><div class="c-l">C</div></div>
        <div class="trow lv1"><div class="c-name"><svg width="19" height="36"><path d="M9.500 18V36M9.500 18.500H19" stroke="#999" stroke-dasharray="1 2"/></svg><svg class="i16"><use href="#clk"/></svg><span class="tl">History Modeling Mode</span></div><div class="c-s"></div><div class="c-s"></div><div class="c-l"></div></div>
        <div class="trow lv1"><div class="c-name"><svg width="19" height="36"><use href="#plus"/></svg><svg class="i16" viewBox="0 0 16 16"><path d="M.5.5H15.500V15.500H.5zM.5 3H15.500" fill="none" stroke="#333" stroke-width="1.200"/><use href="#part" x="3" y="4" width="10" height="10"/></svg><span class="tl">Model Views</span></div><div class="c-s"></div><div class="c-s"></div><div class="c-l"></div></div>
        <div class="trow lv1"><div class="c-name"><svg width="19" height="36"><use href="#plus"/></svg><svg width="16" height="16"><use href="#tick"/></svg><svg width="16" height="16" viewBox="0 0 16 16"><path d="M1 5 11 1V12L1 15z" fill="#ffd9b0" stroke="#ee7d10" stroke-width="1.400"/><path d="M3 7 9 4 13 7V11L7 12 3 10z" fill="#666"/><circle cx="8" cy="8" r="2" fill="#ccc"/></svg><span class="tl">Cameras</span></div><div class="c-s"></div><div class="c-s"></div><div class="c-l"></div></div>
        <div class="trow lv1"><div class="c-name"><svg width="19" height="36"><use href="#plus"/></svg><svg width="16" height="16"><use href="#tick"/></svg><svg width="16" height="16" viewBox="0 0 16 16"><path d="M1 11V2.500H13M3 4.500H15.500V13.500H3zM9 13V10H15" fill="none" stroke="#444" stroke-width="1.200"/></svg><span class="tl">Drawing</span></div><div class="c-s"></div><div class="c-s"></div><div class="c-l"></div></div>
        <div class="trow lv1"><div class="c-name"><svg width="19" height="36"><use href="#minus"/></svg><svg width="16" height="16" viewBox="0 0 16 16"><circle cx="8" cy="8" r="7" fill="#1fd02e" stroke="#17731d"/><circle cx="6" cy="5.500" r="2.500" fill="#b8ffbd"/></svg><svg width="16" height="16" viewBox="0 0 16 16"><path d="M1 1H15V15H1z" fill="#fff" stroke="#999" stroke-dasharray="3 1"/><path d="M3.500 3.500h6v6h-6z" fill="none" stroke="#333"/><path d="M6.500 6.500h6.500v6.500h-6.500z" fill="#f48a1c" stroke="#a65000"/></svg><span class="tl">Model History</span></div><div class="c-s"></div><div class="c-s"><svg width="15" height="15"><use href="#tick"/></svg></div><div class="c-l"></div></div>
      </div>
      <div class="hbar"><div class="hthumb"></div></div>
    </div>
    <div class="splitter"></div>
    <div class="sect d-flex align-items-center"><i></i>Search</div>
    <div class="sect d-flex align-items-center"><i></i>Dependencies</div>
    <div class="sect d-flex align-items-center"><i></i>Details</div>
    <div class="sect d-flex align-items-center"><i></i>Preview</div>
  </section>

  <section class="flex-shrink-0">
    <div class="doc-tabs d-flex">
      <div class="doc-tab active d-flex align-items-center"><svg width="16" height="16"><use href="#part"/></svg><span class="g4">Battery_Case.prt</span><svg width="9" height="9" class="g7" viewBox="0 0 9 9"><path d="M1 1 8 8M8 1 1 8" stroke="#fff" stroke-width="2.200"/></svg></div>
      <div class="doc-tab d-flex align-items-center"><svg width="16" height="16"><use href="#part"/></svg><span class="g4">Base_Part.prt</span></div>
    </div>
    <div class="view-area">
      <svg width="2137" height="1354" viewBox="563 337 2137 1354">
        <g stroke-linejoin="round" stroke="#26394d" stroke-width="1">
          <path d="M1624.600 764.700 1770 768.400 2220.300 909 2074.900 905.500z" fill="#3da8ff"/>
          <path d="M1655 771.600 1781 775.300 2187.300 901.500 2062.300 898.500z" fill="#3da8ff"/>
          <path d="M1655 771.600 1781 775.300 1772.400 808z" fill="#2d88e4"/>
          <path d="M1624.600 764.700 2074.900 905.500 1975.500 1286.500 1524.200 1146.200z" fill="#3da8ff"/>
          <path d="M2074.900 905.500 2220.300 909 2120.900 1291 1975.500 1286.500z" fill="#2d88e4"/>
        </g>
        <path d="M1524.200 1146.200 1975.500 1286.500 2120.900 1291" fill="none" stroke="#3a5cff" stroke-width="2"/>
        <path d="M2053.600 1264.700 2085.600 1265.800 2082.600 1277 2051 1276.400z" fill="#3da8ff" stroke="#3a5cff" stroke-width="2"/>
        <path d="M2053 1268 2080 1276M2053 1270H2060V1266" fill="none" stroke="#223"/>
        <g id="holes"></g>
        <g fill="none" stroke="#f04030" stroke-width="2.300">
          <path d="M1822.300 1218 1841 1145M1832.300 1177.700 1849.300 1179 1869.300 1189 1860 1227M1832.300 1180 1838 1176 1849.300 1178M1849.300 1179 1839.300 1217.500M1822.300 1217.500H1843L1876 1229 1860 1230 1822.300 1218 1893 1240M1855 1213 1859 1219"/>
          <path d="M1837.500 1153 1842.300 1139 1843 1154zM1876 1232 1894 1240.500 1880 1239zM1848 1217 1856 1216 1850 1220z" fill="#d83020" stroke-width="1"/>
          <path d="M1841 1127.500h7l-5 9h6M1897 1237 1904 1248M1904 1237 1897 1248" stroke-width="1.300"/>
        </g>
        <path d="M647 1555.300H665.300L702 1567.300 691.300 1608.300 673.500 1607 636.700 1596zL684.700 1566.700 702 1567.300M684.700 1566.700 673.500 1607" fill="none" stroke="#aaa"/>
        <path d="M675 1562 683 1529" stroke="#0a3cf0" stroke-width="5"/><path d="M678 1529 687 1511 688 1532z" fill="#0a3cf0"/>
        <path d="M687 1586.500 716 1597" stroke="#d33" stroke-width="5"/><path d="M716 1591 733 1602 713 1601z" fill="#c22"/>
        <g font-family="Open Sans, sans-serif" font-size="12"><text x="686" y="1506" fill="#2a5cff">Z</text><text x="738" y="1608" fill="#d33">X</text><text x="699" y="1586" fill="#2a9a2a">Y</text></g>
      </svg>
    </div>
  </section>

  <aside class="side-bar d-flex flex-column">
    <svg class="i24"><use href="#part"/></svg>
    <svg class="i24 t7" viewBox="0 0 32 32"><use href="#boss" width="27" height="27"/><use href="#wrench" y="2" width="32" height="32"/></svg>
    <svg class="i24 t8" viewBox="0 0 32 32"><path d="M5 1V27H22M1 16Q8 1 29 1" fill="none" stroke="#00a5cf" stroke-width="1.800"/><circle cx="16" cy="15" r="7" fill="none" stroke="#00a5cf" stroke-width="1.800"/><use href="#wrench" y="2" width="32" height="32"/></svg>
    <svg class="i24 t7"><use href="#extrude"/></svg>
    <svg class="i24 t9"><use href="#hole"/></svg>
    <svg class="i24 t7"><use href="#pattern"/></svg>
    <svg class="i24 t8" viewBox="0 0 24 24"><path d="M6 10H18M6 14H18" stroke="#00007a" stroke-width="1.600"/></svg>
    <svg class="i24 t8" viewBox="0 0 24 24"><path d="M2 10h9M0 14h10M1 18h9M2 22h9" stroke="#4aa8e0" stroke-width="1.500"/><path d="M6 6 14 1 18 3 17 7 9 9z" fill="#e8be8c" stroke="#9b6b35" stroke-width=".8"/><path d="M17 1l5 0v5h-4z" fill="#2430c0"/><path d="M15.500 9 18 14 23.500 14.500 19.500 18 21 23.500 15.500 20.500 11 23 12 17.500 8 14 13.500 13.500z" fill="#ffe04a" stroke="#c99a10" stroke-width=".8"/></svg>
    <svg class="i24 t8"><use href="#constr"/></svg>
    <svg class="i24 t7"><use href="#expblk"/></svg>
    <div class="side-end"></div>
    <svg width="6" height="10" class="side-arrow" viewBox="0 0 6 10"><path d="M6 0V10L0 5z" fill="#111"/></svg>
  </aside>
</main>

<footer class="status d-flex nw"><div>MB1 to orient the view perpendicular to the preselected face</div><div>Datum Coordinate System(0)</div></footer>

<section class="taskbar d-flex align-items-center">
  <svg width="60" height="60" class="moon" viewBox="0 0 60 60"><defs><linearGradient id="mn" x2="0" y2="1"><stop stop-color="#f5c030"/><stop offset="1" stop-color="#f07a18"/></linearGradient></defs><path d="M45 18Q50 40 38 52 24 60 12 52 4 45 2 36 16 40 25 32 30 26 30 18z" fill="url(#mn)"/><circle cx="38" cy="13" r="15.500" fill="#c42b1c"/><text x="33" y="20" font-family="Open Sans, sans-serif" font-size="20" fill="#fff">1</text></svg>
  <svg width="46" height="46" class="start" viewBox="0 0 46 46"><defs><linearGradient id="wn" gradientUnits="userSpaceOnUse" x2="46" y2="46"><stop stop-color="#8be2ff"/><stop offset=".5" stop-color="#3cc4fb"/><stop offset="1" stop-color="#0088ee"/></linearGradient></defs><path d="M2 0H22V22H0V2zM24 0H44L46 2V22H24zM0 24H22V46H2L0 44zM24 24H46V44L44 46H24z" fill="url(#wn)"/></svg>
  <div class="pill d-flex align-items-center">
    <svg width="30" height="31" class="g21" viewBox="0 0 30 31"><circle cx="13" cy="13" r="11.500" fill="none" stroke="#333" stroke-width="3"/><path d="M21 21 28 29" stroke="#333" stroke-width="3.500" stroke-linecap="round"/></svg>
    <span class="g20">Search</span>
    <svg width="90" height="42" class="beast" viewBox="0 0 90 42"><path d="M0 33Q40 20 90 28 84 42 68 42H18Q6 42 0 33z" fill="#b3bd80"/><ellipse cx="44" cy="36" rx="26" ry="5" fill="#83b868"/><path d="M3 24Q10 10 24 4L40 1 56 5Q66 -2 80 5 88 12 84 25L80 20 76 25 72 19 66 22 60 14 54 18 57 30 50 31 44 19 38 18 36 30H30L32 22 27 32H22L27 18 19 15Q8 17 4 24z" fill="#857a94"/><path d="M22 9 40 3 46 6 30 14z" fill="#4a5a7a"/><path d="M56 6Q80 0 84 24L80 20 76 24 70 18 60 14z" fill="#6a5c70"/><path d="M58 4Q72 1 80 8 68 6 60 9z" fill="#9a8a8c"/></svg>
  </div>
  <div class="d-flex g6">
    <div class="slot"><svg class="i48" viewBox="0 0 48 48"><rect x="12" y="2" width="36" height="32" rx="2" fill="#f2f2f2"/><rect x="0" y="14" width="36" height="32" rx="2" fill="#6a6560"/><path d="M12 14H36V34H12z" fill="#b9b7b5"/></svg></div>
    <div class="slot"><svg class="i48" viewBox="0 0 48 48"><defs><linearGradient id="tm" x2="1" y2="1"><stop stop-color="#9a68b8"/><stop offset=".5" stop-color="#5b5fc7"/><stop offset="1" stop-color="#5560d8"/></linearGradient></defs><path d="M24 1A22.500 22.500 0 1 1 13 44L1 47 4 34A22.500 22.500 0 0 1 24 1z" fill="url(#tm)"/><rect x="11" y="15" width="18" height="18" rx="3" fill="#fff"/><path d="M31 21 37 17V31L31 27z" fill="#fff"/></svg></div>
    <div class="slot"><svg class="i48" viewBox="0 0 48 48"><path d="M11 10V2H37V10" fill="none" stroke="#28b4f5" stroke-width="4"/><path d="M1 7H47V43Q47 48 42 48H6Q1 48 1 43z" fill="#f3f3f3"/><path d="M11 4v7M37 4v7" stroke="#1d9be0" stroke-width="4"/><path d="M14 17h9v9h-9z" fill="#f25022"/><path d="M25 17h9v9h-9z" fill="#7fba00"/><path d="M14 28h9v9h-9z" fill="#00a4ef"/><path d="M25 28h9v9h-9z" fill="#ffb900"/></svg></div>
    <div class="slot run"><svg class="i48" viewBox="0 0 48 48"><path d="M0 6Q0 4 2 4H14L19 8H46V20H0z" fill="#e0a010"/><path d="M0 11H18L21 9H46Q48 9 48 11V46H0z" fill="#ffd047"/><path d="M8 46V36Q8 32 12 32H36Q40 32 40 36V46z" fill="#0f70c0"/><path d="M14 39H34" stroke="#0a4a8c" stroke-width="2.500"/></svg></div>
    <div class="slot"><svg class="i48" viewBox="0 0 48 48"><path d="M0 12H14L18 6H30L34 12H48V43H0z" fill="#7a838b"/><path d="M0 41H48V44H0z" fill="#48505a"/><path d="M3 9h8v3H3z" fill="#30a8e8"/><circle cx="24" cy="26" r="13" fill="#fff"/><circle cx="24" cy="26" r="9.500" fill="#9a8ce8"/><path d="M24 35.500A9.500 9.500 0 0 0 33 23L17 33Q20 35.500 24 35.500z" fill="#48a8ee"/><circle cx="42" cy="18" r="2.200" fill="#ddd"/></svg></div>
    <div class="slot"><svg class="i48" viewBox="0 0 48 48"><path d="M24 2 43 13V35L24 46 5 35V13zM6 14 19 22M43 13 24 25V46" fill="none" stroke="#fff" stroke-width="3.500" stroke-linejoin="round"/></svg></div>
    <div class="slot"><svg class="i48" viewBox="0 0 48 48"><path d="M20 4H28L30 1 38 5V12L41 16 48 19V29L41 32 38 36V43L30 47 26 42H21L18 47 10 43V36L7 32 0 29V19L7 16 10 12V5L18 1z" fill="#7d8b95"/><circle cx="24" cy="24" r="12" fill="#f0f0f0"/><circle cx="24" cy="24" r="8.500" fill="#0a66b8"/></svg></div>
    <div class="slot"><svg class="i48" viewBox="0 0 48 48"><rect x="6" width="36" height="48" rx="2" fill="#76838e"/><path d="M10 4H38V12H10z" fill="#40d0f8"/><path d="M10 16h8v8h-8zM20 16h8v8h-8zM30 16h8v8h-8zM10 26h8v8h-8zM20 26h8v8h-8zM10 36h8v8h-8zM20 36h8v8h-8z" fill="#cdd8e0"/><path d="M30 26h8v18h-8z" fill="#104a88"/></svg></div>
    <div class="slot run"><svg class="i48" viewBox="0 0 48 48"><defs><linearGradient id="ed" x2="1" y2=".3"><stop stop-color="#1a9fe0"/><stop offset=".5" stop-color="#2cc3d0"/><stop offset="1" stop-color="#5fe050"/></linearGradient></defs><circle cx="24" cy="24" r="24" fill="#0c7fd6"/><path d="M1 18Q6 0 26 0 48 2 48 22 46 32 36 32 28 32 29 27 32 22 26 16 14 9 1 22z" fill="url(#ed)"/><path d="M19 24Q14 40 30 47 40 45 45 36 32 40 26 32 22 28 25 22z" fill="#134a98"/><path d="M28 21Q22 27 27 32 33 38 44 34L49 30V26Q44 32 36 32 28 31 29 26z" fill="#302116"/></svg></div>
    <div class="slot run"><svg class="i48" viewBox="0 0 48 48"><circle cx="24" cy="24" r="24" fill="#fcc31e"/><path d="M3.200 12A24 24 0 0 1 44.800 12H24z" fill="#e33b2e"/><path d="M3.200 12A24 24 0 0 0 24 48L34 30 24 24z" fill="#229a48"/><path d="M3.200 12 13.600 30 24 24 24 12z" fill="#229a48"/><path d="M3.200 12 12 26 24 12z" fill="#e33b2e"/><circle cx="24" cy="24" r="12" fill="#fff"/><circle cx="24" cy="24" r="9.500" fill="#2f7de8"/></svg></div>
    <div class="slot run"><svg class="i48" viewBox="0 0 48 48"><circle cx="24" cy="24" r="24" fill="#fff"/><g fill="none" stroke-width="2.600"><path d="M25 4Q17 26 41 30" stroke="#60c040"/><circle cx="24" cy="24" r="20.500" stroke="#16264c"/><path d="M6 18Q18 8 32 16 42 26 37 40M5 30Q4 12 22 13 40 14 42 30" stroke="#16264c"/></g></svg></div>
    <div class="slot run"><svg class="i48" viewBox="0 0 48 48"><path d="M8 7Q22 6 26 22 36 18 41 26 48 28 47 36 46 42 38 42H3Q0 38 3 34 0 30 2 26 0 22 4 18 4 12 8 7z" fill="#0c9cd8" stroke="#fff" stroke-width="1.500"/><path d="M14 36Q4 30 3 22M15 34Q8 24 6 14M16 34Q18 20 11 10M17 36Q24 30 24 22M4 35l8 4" fill="none" stroke="#fff" stroke-width="1.700"/><path d="M15 31l4 5-4 5-4-5z" fill="#0c9cd8" stroke="#fff" stroke-width="1.300"/></svg></div>
    <div class="slot run on"><svg class="i48" viewBox="0 0 48 48"><path d="M0 6H42V48H0z" fill="#009c9c"/><path d="M6 0H48V42H6z" fill="#93140f"/><text x="10" y="34" font-family="Open Sans, sans-serif" font-weight="700" font-size="21" textLength="27" lengthAdjust="spacingAndGlyphs" fill="#fff">NX</text></svg></div>
    <div class="slot run"><svg class="i48" viewBox="0 0 48 48"><path d="M11 3H46Q48 3 48 5V14H11z" fill="#41a5ee"/><path d="M11 14H48V24H11z" fill="#2b7cd3"/><path d="M11 24H48V35H11z" fill="#185abd"/><path d="M11 35H48V43Q48 45 46 45H13Q11 45 11 43z" fill="#103f91"/><rect y="12" width="24" height="24" rx="2" fill="#1d56b8"/><text x="3" y="30.500" font-family="Open Sans, sans-serif" font-weight="700" font-size="18" fill="#fff">W</text></svg></div>
  </div>
  <div class="tray d-flex align-items-center">
    <svg width="22" height="12" viewBox="0 0 22 12"><path d="M1 11 11 1 21 11" fill="none" stroke="#fff" stroke-width="2.500"/></svg>
    <svg width="32" height="24" class="g37" viewBox="0 0 32 24"><path d="M1 9Q16-6 31 9M6 14Q16 4 26 14M10.500 18Q16 12 21.500 18" fill="none" stroke="#fff" stroke-width="2"/><circle cx="16" cy="21" r="2.500" fill="#fff"/></svg>
    <svg width="33" height="26" class="g14" viewBox="0 0 33 26"><path d="M1 9H6L13 2V24L6 17H1zM17 8Q20 13 17 18M21 5Q26 13 21 21" fill="none" stroke="#fff" stroke-width="2"/><path d="M25 1Q33 13 25 25" fill="none" stroke="#81776e" stroke-width="2"/></svg>
    <svg width="32" height="20" class="g15" viewBox="0 0 32 20"><rect x="1" y="1" width="26" height="18" rx="4" fill="none" stroke="#fff" stroke-width="2"/><rect x="4" y="4" width="14" height="12" rx="1" fill="#fff"/><path d="M29 7v6" stroke="#fff" stroke-width="4"/></svg>
    <div class="clock">9:56 PM<br>4/5/2024</div>
    <svg width="26" height="28" class="g20" viewBox="0 0 26 28"><path d="M2 22 5 17V10Q6 1 13 1T21 10V17L24 22zM9 23Q13 30 17 23" fill="none" stroke="#fff" stroke-width="2"/></svg>
  </div>
</section>

<script>
// Feature rows of the model history
const features=[
 ["dcs","Datum Coordinate System (0)"],["sketch",'Sketch (1) "SKETCH_000"'],["extrude","Extrude (2)"],["shell","Shell (3)"],
 ["sketch",'Sketch (4) "SKETCH_001"'],["extrude","Extrude (5)"],["sketch",'Sketch (6) "SKETCH_002"'],["extrude","Extrude (7)"],
 ["cb","Ø0.188 Counterbored Hole (8)"],["pattern","Pattern Feature [Linear] (9)"],["mirror","Mirror Feature (10)"]];
const special={
 dcs:'<svg width="16" height="16" viewBox="0 0 16 16"><path d="M8 1V9L2 14M8 9 14 14M5 9 8 6 11 9V12L8 14 5 12zM6.500 3 8 1 9.500 3M1 12v2.500h3M15 12v2.500h-3" fill="none" stroke="#d9709c" stroke-width="1.300"/></svg>',
 cb:'<svg width="16" height="16" viewBox="0 0 16 16"><path d="M1.500 0H14.500V3H11.500V16H4.500V3H1.500z" fill="#fff" stroke="#444" stroke-width="1.200"/></svg>'};
const tick='<svg width="15" height="15"><use href="#tick"/></svg>';
const tree=document.getElementById("tree");
let out="";
features.forEach(([ic,name],i)=>{
  let indent='<svg width="37" height="36"><use href="#ln"/></svg>';
  if(ic==="pattern") indent='<svg width="37" height="36"><use href="#plus" x="19" width="19" height="36"/></svg>';
  if(ic==="mirror") indent='<svg width="37" height="36"><path d="M28.500 0V18.500H37" fill="none" stroke="#999" stroke-dasharray="1 2"/></svg>';
  const icon=special[ic]||`<svg width="16" height="16"><use href="#${ic}"/></svg>`;
  const cmark=ic==="mirror"?'<svg width="16" height="16" viewBox="0 0 16 16"><path d="M3.500 0V16M3.500 3H6M3.500 13H6M6 .5h4v4h-4zM6 11h4v4h-4z" fill="none" stroke="#333"/><path d="M6 6h4.500v4h-4.500z" fill="#f28a1c"/></svg>':'';
  out+=`<div class="trow${i===0?" picked":""}"><div class="c-name">${indent}<svg width="16" height="16"><use href="#eye"/></svg>${icon}<span class="tl g1${ic==="mirror"?" fw-bold":""}">${name}</span></div><div class="c-s">${cmark}</div><div class="c-s">${tick}</div><div class="c-l"></div></div>`;
});
for(let i=0;i<16;i++) out+='<div class="trow"><div class="c-name"></div><div class="c-s"></div><div class="c-s"></div><div class="c-l"></div></div>';
tree.insertAdjacentHTML("beforeend",out);
// 3 x 8 array of counterbored holes
let h="";
for(let r=0;r<3;r++)for(let c=0;c<8;c++){
  const x=1598.2+45.36*c-13.1*r,y=1013.6+14.08*c+49.85*r;
  const k=(r<2&&c<3)||(r===2&&c===0)?"hd":(r===2?"hb":"hw");
  h+=`<use href="#${k}" x="${x-20}" y="${y-22}" width="40" height="44"/>`;
  if(r===2&&c===1) h+=`<path d="M${x-5} ${y+3}H${x+14}Q${x+15} ${y-9} ${x+6} ${y-14} ${x-5} ${y-8} ${x-5} ${y+3}z" fill="#2d88e4" stroke="#16314d" stroke-width=".9"/>`;
}
document.getElementById("holes").innerHTML=h;
</script>
</body>
</html>
